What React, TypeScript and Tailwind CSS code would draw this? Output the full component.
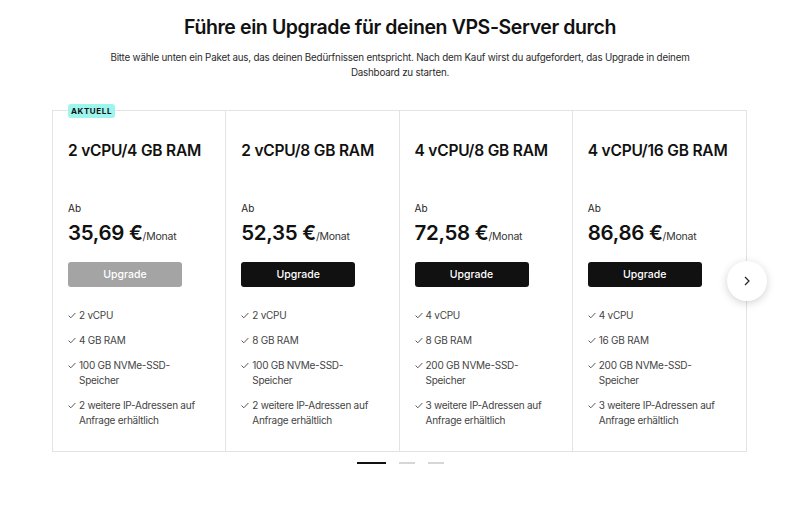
import React from 'react';

interface Plan {
  name: string;
  price: string;
  current?: boolean;
  features: string[];
}

const plans: Plan[] = [
  {
    name: '2 vCPU/4 GB RAM',
    price: '35,69 €',
    current: true,
    features: ['2 vCPU', '4 GB RAM', '100 GB NVMe-SSD-Speicher', '2 weitere IP-Adressen auf Anfrage erhältlich'],
  },
  {
    name: '2 vCPU/8 GB RAM',
    price: '52,35 €',
    features: ['2 vCPU', '8 GB RAM', '100 GB NVMe-SSD-Speicher', '2 weitere IP-Adressen auf Anfrage erhältlich'],
  },
  {
    name: '4 vCPU/8 GB RAM',
    price: '72,58 €',
    features: ['4 vCPU', '8 GB RAM', '200 GB NVMe-SSD-Speicher', '3 weitere IP-Adressen auf Anfrage erhältlich'],
  },
  {
    name: '4 vCPU/16 GB RAM',
    price: '86,86 €',
    features: ['4 vCPU', '16 GB RAM', '200 GB NVMe-SSD-Speicher', '3 weitere IP-Adressen auf Anfrage erhältlich'],
  },
];

function Check() {
  return (
    <svg width="8" height="7" viewBox="0 0 8 7" className="mt-[4px] shrink-0" fill="none">
      <path d="M0.6 3.6 L2.8 5.8 L7.4 1" stroke="#444" strokeWidth="0.9" />
    </svg>
  );
}

function PlanCard({ plan, last }: { plan: Plan; last: boolean }) {
  return (
    <div className={`relative px-[15px] pt-[30px] pb-[23px] ${last ? '' : 'border-r border-[#e3e3e3]'}`}>
      {plan.current && (
        <span className="absolute left-[15px] top-[-7px] rounded-[3px] bg-[#9df5ee] px-[3px] text-[8px] font-bold leading-[14px] tracking-[0.6px] text-[#111]">
          AKTUELL
        </span>
      )}
      <h2 className="whitespace-nowrap text-[15.5px] font-semibold leading-[20px] tracking-[-0.2px] text-[#111]">
        {plan.name}
      </h2>
      <p className="mt-[40px] text-[10px] leading-[14px] text-[#222]">Ab</p>
      <p className="mt-[5px] whitespace-nowrap leading-[26px] text-[#111]">
        <span className="text-[20.5px] font-semibold tracking-[-0.3px]">{plan.price}</span>
        <span className="text-[10.5px] tracking-[-0.2px] text-[#333]">/Monat</span>
      </p>
      <button
        className={`mt-[12px] h-[25px] w-[114px] rounded-[3px] text-[10.5px] font-medium text-white ${
          plan.current ? 'bg-[#a4a4a4]' : 'bg-[#111111]'
        }`}
      >
        Upgrade
      </button>
      <ul className="mt-[21px] flex flex-col gap-[10px]">
        {plan.features.map((f, i) => (
          <li key={i} className="flex gap-[3px] text-[10px] leading-[15px] tracking-[-0.25px] text-[#444]">
            <Check />
            <span className="max-w-[125px]">{f}</span>
          </li>
        ))}
      </ul>
    </div>
  );
}

export default function App() {
  return (
    <div className="min-h-[511px] w-[800px] bg-white font-['Inter',sans-serif]">
      <h1 className="pt-[14px] text-center text-[19.5px] font-semibold leading-[26px] tracking-[-0.4px] text-[#111]">
        Führe ein Upgrade für deinen VPS-Server durch
      </h1>
      <p className="mx-auto mt-[10px] w-[590px] text-center text-[9.8px] leading-[15px] tracking-[-0.2px] text-[#2b2b2b]">
        Bitte wähle unten ein Paket aus, das deinen Bedürfnissen entspricht. Nach dem Kauf wirst du aufgefordert, das Upgrade in deinem Dashboard zu starten.
      </p>

      <div className="relative mx-[52px] mt-[30px] w-[695px] border border-[#e3e3e3]">
        <div className="grid grid-cols-4">
          {plans.map((p, i) => (
            <PlanCard key={p.name} plan={p} last={i === plans.length - 1} />
          ))}
        </div>
        <button className="absolute right-[-21px] top-[150px] flex h-[40px] w-[40px] items-center justify-center rounded-full bg-white shadow-[0_2px_8px_rgba(0,0,0,0.18)]">
          <svg width="8" height="10" viewBox="0 0 8 10" fill="none">
            <path d="M2 1 L6 5 L2 9" stroke="#222" strokeWidth="1.2" />
          </svg>
        </button>
      </div>

      <div className="mt-[10px] flex items-center justify-center gap-[13px]">
        <span className="h-[2px] w-[29px] bg-[#111]" />
        <span className="h-[2px] w-[16px] bg-[#d6d6d6]" />
        <span className="h-[2px] w-[16px] bg-[#d6d6d6]" />
      </div>
    </div>
  );
}
